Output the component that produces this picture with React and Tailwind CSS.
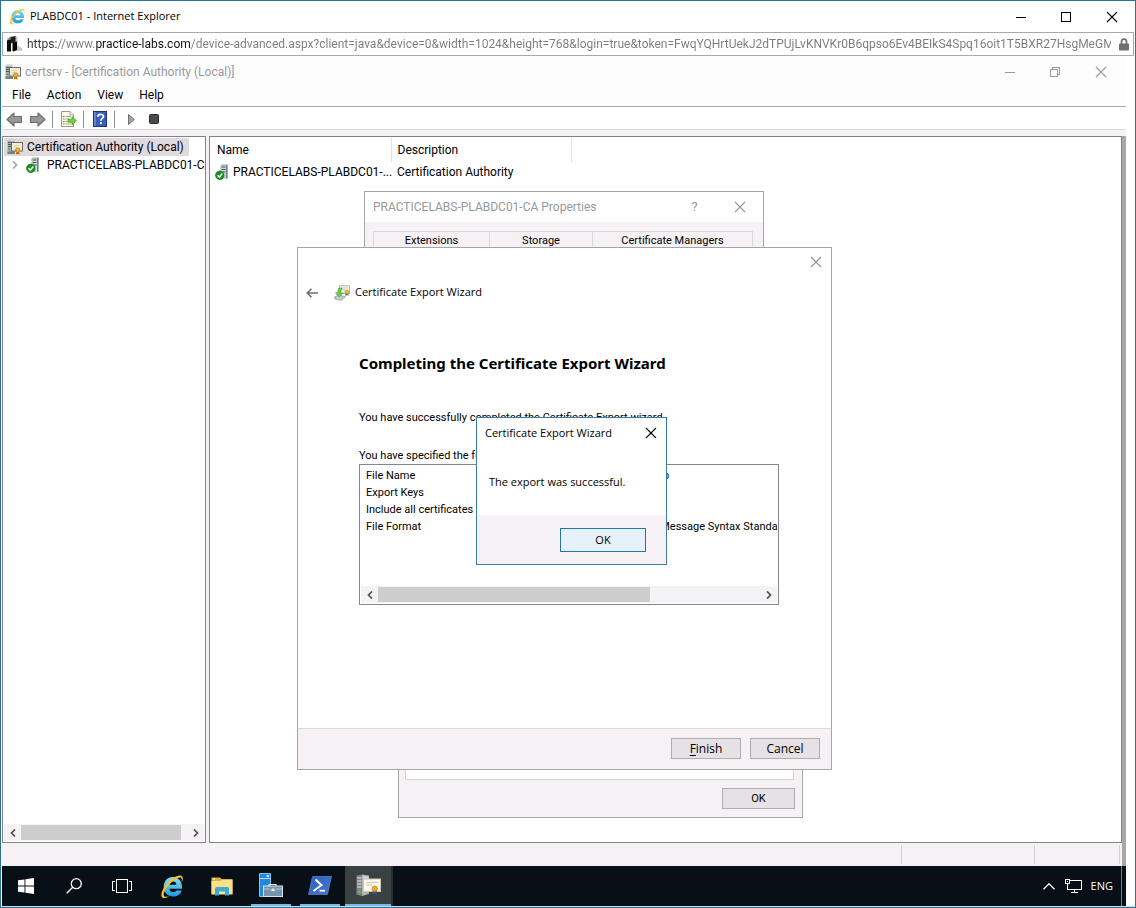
import React from "react";

const URL_TEXT =
  "https://www.practice-labs.com/device-advanced.aspx?client=java&device=0&width=1024&height=768&login=true&token=FwqYQHrtUekJ2dTPUjLvKNVKr0B6qpso6Ev4BEIkS4Spq16oit1T5BXR27HsgMeGMVbTqR5c";

/* ---------- small glyphs ---------- */

function CloseGlyph({ className = "" }) {
  return (
    <svg width="12" height="12" viewBox="0 0 12 12" className={className} aria-hidden="true">
      <path d="M1 1L11 11M11 1L1 11" stroke="currentColor" strokeWidth="1.1" fill="none" />
    </svg>
  );
}

function MinimizeGlyph() {
  return (
    <svg width="10" height="10" viewBox="0 0 10 10" shapeRendering="crispEdges" aria-hidden="true">
      <path d="M0 5.5H10" stroke="currentColor" />
    </svg>
  );
}

function MaximizeGlyph() {
  return (
    <svg width="10" height="10" viewBox="0 0 10 10" shapeRendering="crispEdges" aria-hidden="true">
      <rect x="0.5" y="0.5" width="9" height="9" fill="none" stroke="currentColor" />
    </svg>
  );
}

function RestoreGlyph() {
  return (
    <svg width="10" height="10" viewBox="0 0 10 10" shapeRendering="crispEdges" aria-hidden="true">
      <path d="M0.5 2.5H7.5V9.5H0.5ZM2.5 2V0.5H9.5V7.5H8" fill="none" stroke="currentColor" />
    </svg>
  );
}

function Chevron({ dir = "left", className = "" }) {
  return (
    <svg width="6" height="8" viewBox="0 0 6 8" className={className} aria-hidden="true">
      <path
        d={dir === "left" ? "M5 0.5L1.5 4L5 7.5" : "M1 0.5L4.5 4L1 7.5"}
        fill="none"
        stroke="currentColor"
        strokeWidth="1.7"
      />
    </svg>
  );
}

/* ---------- icons ---------- */

function IeIcon({ size = 17 }) {
  return (
    <svg width={size} height={size} viewBox="0 0 24 24" aria-hidden="true">
      <defs>
        <linearGradient id="ieBlue" x1="0" y1="0" x2="0" y2="1">
          <stop offset="0" stopColor="#8adcf9" />
          <stop offset="1" stopColor="#1c9be0" />
        </linearGradient>
      </defs>
      <path
        d="M12.400 2.900C7 2.900 3.500 7 3.500 12.300s3.800 9.400 9 9.400c4.100 0 7.200-2.100 8.300-5.900h-5.100c-.6 1-1.700 1.600-3 1.600-2.100 0-3.500-1.200-3.600-3.200h12.100c.4-6.600-3.200-11.300-8.800-11.300zM9.100 10.300c.3-1.800 1.600-3 3.400-3s3.100 1.200 3.300 3z"
        fill="url(#ieBlue)"
      />
      <path
        d="M20.800 8.600c1.600-3.300 1.500-5.800-.2-6.700C17.400.3 10.600 4 6 9.900 1.700 15.300.1 21 2.300 22.700c1.400 1 4 .2 6.700-1.700-2.300 1-4.100 1.200-4.900.4-1.500-1.500.3-6 4.100-10.500C12.400 6 17.800 2.500 20 3.500c1.100.6 1.300 2.500.8 5.100z"
        fill="#f3c22f"
      />
    </svg>
  );
}

function LabsIcon() {
  return (
    <svg width="16" height="16" viewBox="0 0 16 16" aria-hidden="true">
      <path d="M9 0.500H11.500V9.500L16 12V15H9Z" fill="#c9c9c9" />
      <path d="M1.500 2.500L4.500 0.500V4.500L1.500 5Z" fill="#8e8e8e" />
      <path d="M1 4.500L5 3.500V15.500H1Z" fill="#0b0b0b" />
      <path d="M4.500 1L9.500 0V6L4.500 7.500Z" fill="#1d1d1d" />
      <path d="M6.500 6.500L11 5.500V14L7.500 15.500L6.500 15Z" fill="#050505" />
    </svg>
  );
}

function LockIcon() {
  return (
    <svg width="12" height="13" viewBox="0 0 12 13" aria-hidden="true">
      <path d="M3.500 6V3.700a2.500 2.500 0 0 1 5 0V6" fill="none" stroke="#6f6f6f" strokeWidth="1.700" />
      <rect x="1" y="5.500" width="10" height="7" rx="0.800" fill="#6f6f6f" />
    </svg>
  );
}

function CaIcon({ size = 16 }) {
  return (
    <svg width={size} height={size} viewBox="0 0 16 16" aria-hidden="true">
      <path d="M0.500 1.500L2 0.500H7.500V14.500H0.500Z" fill="#aab0b4" />
      <path d="M0.500 1.500L2 0.500H7.500L6.500 2Z" fill="#dfe2e4" />
      <path d="M1 3.500H6M1 5.500H5M1 7.500H5" stroke="#545b60" strokeWidth="1" />
      <path d="M0.500 12.500H8V15H0.500Z" fill="#777e83" />
      <rect x="1.200" y="9.500" width="2.200" height="1.500" fill="#4fae3e" />
      <rect x="4.500" y="3.500" width="11" height="8.500" fill="#fffdf4" stroke="#6f6b60" strokeWidth="1" />
      <rect x="6" y="5" width="8" height="5.500" fill="none" stroke="#dfcf9b" strokeWidth="0.600" />
      <path d="M6.800 6.700H12.500M6.800 8.300H10" stroke="#b9b09a" strokeWidth="0.700" />
      <path d="M9.500 12L8.800 15.800L10.700 14.800L12.600 15.800L12 12Z" fill="#b96c14" />
      <circle cx="10.800" cy="11" r="2.300" fill="#f0b02d" stroke="#b97412" strokeWidth="0.700" />
    </svg>
  );
}

function CaServerIcon() {
  return (
    <svg width="16" height="16" viewBox="0 0 16 16" className="shrink-0" aria-hidden="true">
      <path d="M5.500 1.500L7 0.500H12.500V14.500H5.500Z" fill="#94a1a3" />
      <path d="M6 1.500H11V14H6Z" fill="#cfd7d8" />
      <path d="M6.500 3H10.500M6.500 5.500H10.500M6.500 8H10.500" stroke="#3f585c" strokeWidth="1.200" />
      <path d="M11 1.500L12.500 0.500V14.500H11Z" fill="#768486" />
      <circle cx="4.800" cy="11.300" r="4.200" fill="#149420" stroke="#0b6412" strokeWidth="0.700" />
      <path d="M2.500 11.300L4.300 13.200L7.300 9.500" fill="none" stroke="#fff" strokeWidth="1.500" />
    </svg>
  );
}

function ArrowIcon({ dir }) {
  return (
    <svg width="17" height="15" viewBox="0 0 17 15" aria-hidden="true">
      <path
        d={
          dir === "left"
            ? "M1 7.500L8 1V4.500H15.500V10.500H8V14Z"
            : "M16 7.500L9 1V4.500H1.500V10.500H9V14Z"
        }
        fill="#989898"
        stroke="#6c6c6c"
        strokeWidth="1.100"
        strokeLinejoin="round"
      />
    </svg>
  );
}

function ExportListIcon() {
  return (
    <svg width="17" height="16" viewBox="0 0 17 16" aria-hidden="true">
      <path d="M1.500 0.500H10L13.500 4V15.500H1.500Z" fill="#fffbe6" stroke="#9a9a86" />
      <path d="M10 0.500V4H13.500" fill="#f3ecc8" stroke="#9a9a86" strokeWidth="0.700" />
      <path d="M3.300 5.500H4.500M3.300 8H4.500M3.300 10.500H4.500M3.300 13H4.500" stroke="#4a4a4a" strokeWidth="1" />
      <path d="M5.500 5.500H11M5.500 8H9M5.500 10.500H9M5.500 13H11" stroke="#a8a79a" strokeWidth="1" />
      <path d="M8 8.200H12V5.700L16.500 9.700L12 13.700V11.200H8Z" fill="#6fd13c" stroke="#3e9c1c" strokeWidth="0.700" />
    </svg>
  );
}

function HelpIcon() {
  return (
    <svg width="14" height="16" viewBox="0 0 14 16" aria-hidden="true">
      <rect x="0.500" y="0.500" width="13" height="15" fill="#3a5cba" stroke="#1c3274" />
      <rect x="1" y="1" width="1.800" height="14" fill="#7189cf" />
      <path
        d="M4.800 5.800C4.800 2.600 10.500 2.600 10.500 5.500C10.500 7.400 7.800 7.500 7.800 9.800"
        fill="none"
        stroke="#fff"
        strokeWidth="1.700"
      />
      <rect x="6.900" y="11" width="1.900" height="2" fill="#fff" />
    </svg>
  );
}

function CertExportIcon() {
  return (
    <svg width="16" height="16" viewBox="0 0 16 16" aria-hidden="true">
      <rect x="5.500" y="0.800" width="10" height="7.500" fill="#fbf7e0" stroke="#8fa6a6" strokeWidth="0.800" />
      <path d="M7.500 3H13.500M7.500 4.700H11" stroke="#a9b6a3" strokeWidth="0.700" />
      <path d="M11.500 7.500L11.200 11L13 10L14.500 11L14 7.500Z" fill="#2d6aa8" />
      <circle cx="12.800" cy="7" r="2" fill="#f2b733" stroke="#b57c15" strokeWidth="0.500" />
      <path d="M0.500 12L5 10L11.500 12L7 15.300L1 14Z" fill="#c9cdcf" stroke="#8b8f92" strokeWidth="0.700" />
      <path d="M4.500 3.500L3.500 7.500L1.500 7.800L5 12L9.300 8.300L7.200 8C6.700 6 7 4.500 8 3Z" fill="#6bcb52" stroke="#3a932a" strokeWidth="0.500" />
    </svg>
  );
}

function WindowsIcon() {
  return (
    <svg width="16" height="16" viewBox="0 0 16 16" fill="#fff" aria-hidden="true">
      <path d="M0 2.300L6.500 1.400V7.500H0ZM7.400 1.300L16 0V7.500H7.400ZM0 8.500H6.500V14.600L0 13.700ZM7.400 8.500H16V16L7.400 14.700Z" />
    </svg>
  );
}

function SearchIcon() {
  return (
    <svg width="16" height="16" viewBox="0 0 16 16" fill="none" stroke="#fff" strokeWidth="1.300" aria-hidden="true">
      <circle cx="10.300" cy="5.700" r="5" />
      <path d="M6.700 9.300L0.700 15.300" />
    </svg>
  );
}

function TaskViewIcon() {
  return (
    <svg width="20" height="14" viewBox="0 0 20 14" fill="none" stroke="#fff" shapeRendering="crispEdges" aria-hidden="true">
      <rect x="4.500" y="0.500" width="11" height="13" />
      <path d="M3 2.500H0.500V11.500H3M17 2.500H19.500V11.500H17" />
    </svg>
  );
}

function FolderIcon() {
  return (
    <svg width="22" height="19" viewBox="0 0 22 19" aria-hidden="true">
      <path d="M0.500 0.500H9L10.500 2H21.500V17H0.500Z" fill="#dcae45" />
      <path d="M2 1.500H4V2.500H2Z" fill="#fff" />
      <path d="M0.500 4H9L10.500 3H21.500V17.500H0.500Z" fill="#fbe08c" />
      <path d="M4 18.500V11.500Q4 10 5.500 10H16.500Q18 10 18 11.500V18.500H14V14.500H8V18.500Z" fill="#3fabcf" />
    </svg>
  );
}

function ServerManagerIcon() {
  return (
    <svg width="24" height="24" viewBox="0 0 24 24" aria-hidden="true">
      <path d="M0.500 0.500H11.500V23.500H0.500Z" fill="#2488dc" stroke="#7cc3f5" />
      <path d="M1 5.500H11" stroke="#b8def8" />
      <rect x="7.500" y="2.300" width="2.500" height="1.500" fill="#fff" />
      <path d="M10 13V11.500H17V13" fill="none" stroke="#dfe7ee" strokeWidth="1.200" />
      <rect x="4.500" y="13" width="19" height="10.500" fill="#7894ac" stroke="#d9e3ec" />
      <path d="M5 16H10L12 17.500H16L18 16H23" fill="none" stroke="#b4c4d2" />
      <rect x="12.700" y="15.500" width="2.600" height="2.600" fill="#e5ecf3" />
    </svg>
  );
}

function PowerShellIcon() {
  return (
    <svg width="24" height="19" viewBox="0 0 24 19" aria-hidden="true">
      <defs>
        <linearGradient id="psBlue" x1="0" y1="0" x2="1" y2="1">
          <stop offset="0" stopColor="#2f62c4" />
          <stop offset="1" stopColor="#4a74c8" />
        </linearGradient>
      </defs>
      <path d="M4.500 0.500H23.500L19.500 18.500H0.500Z" fill="url(#psBlue)" stroke="#5c86d8" strokeWidth="0.700" />
      <path d="M7.500 3.500L13.500 9.200L5.500 15" fill="none" stroke="#fff" strokeWidth="2" />
      <path d="M11.500 14.700H17" stroke="#fff" strokeWidth="1.800" />
    </svg>
  );
}

function CertsrvTaskIcon() {
  return (
    <svg width="25" height="23" viewBox="0 0 25 23" aria-hidden="true">
      <path d="M0.500 1.500L6 0.500V22L0.500 20.500Z" fill="#7e8485" />
      <path d="M6 0.500L13 1.500V20L6 22Z" fill="#aeb4b4" />
      <path d="M6.500 3L12.500 3.500" stroke="#d8dcdc" strokeWidth="1.500" />
      <path d="M1 4H5.500M1 7H5.500M1 10H5.500M1 13H5.500" stroke="#e3e6e6" strokeWidth="1" />
      <rect x="2" y="17" width="2.500" height="2" fill="#67c05b" />
      <rect x="7.500" y="5" width="17" height="12.500" fill="#fbf5ea" stroke="#d5c5aa" />
      <path d="M10 8.500H22M10 11H16" stroke="#cdbfa8" strokeWidth="0.900" />
      <path d="M17 16L16.500 21L18.700 19.500L21 21L20.500 16Z" fill="#30559a" />
      <circle cx="18.700" cy="14.700" r="2.700" fill="#eeae2c" stroke="#b67714" strokeWidth="0.700" />
    </svg>
  );
}

function NetworkIcon() {
  return (
    <svg width="17" height="14" viewBox="0 0 17 14" fill="none" stroke="#fff" shapeRendering="crispEdges" aria-hidden="true">
      <path d="M5 1.500H16.500V10.500H2.500V5" />
      <rect x="0.500" y="0.500" width="4" height="4" />
      <path d="M2 2.500H3M9.500 10.500V13M6 13.500H13" />
    </svg>
  );
}

/* ---------- shared parts ---------- */

function HScrollbar({ thumb }) {
  return (
    <div className="flex h-[17px] items-center bg-[#f5f2f5] text-[#505050]">
      <button type="button" aria-label="Scroll left" className="flex h-full w-[17px] items-center justify-center">
        <Chevron dir="left" />
      </button>
      <div className="h-[15px] flex-1">
        <div className={`h-full bg-[#cdcdcd] ${thumb}`} />
      </div>
      <button type="button" aria-label="Scroll right" className="flex h-full w-[17px] items-center justify-center">
        <Chevron dir="right" />
      </button>
    </div>
  );
}

function PushButton({ children, className = "" }) {
  return (
    <button type="button" className={`border border-[#adadad] bg-[#e5e1e5] text-center text-black ${className}`}>
      {children}
    </button>
  );
}

/* ---------- browser chrome ---------- */

function BrowserHeader() {
  return (
    <header>
      <div className="flex h-[31px] items-center pl-2">
        <IeIcon />
        <h1 className="ml-1 flex-1 text-[11px] text-black">PLABDC01 - Internet Explorer</h1>
        <button type="button" aria-label="Minimize" className="flex h-full w-[45px] items-center justify-center"><MinimizeGlyph /></button>
        <button type="button" aria-label="Maximize" className="flex h-full w-[45px] items-center justify-center"><MaximizeGlyph /></button>
        <button type="button" aria-label="Close" className="flex h-full w-[47px] items-center justify-center"><CloseGlyph /></button>
      </div>
      <label className="mx-px flex h-6 items-center border border-[#a9a9a9] pr-[3px] pl-[3px]">
        <LabsIcon />
        <span className="sr-only">Address</span>
        <input
          type="text"
          readOnly
          value={URL_TEXT}
          className="ml-[5px] min-w-0 flex-1 bg-[linear-gradient(90deg,#333_0_30px,#7b7b7b_30px_68px,#111_68px_163px,#7b7b7b_163px)] bg-clip-text font-['Roboto',sans-serif] text-[12px] text-transparent outline-none"
        />
        <span className="ml-[7px]"><LockIcon /></span>
      </label>
    </header>
  );
}

/* ---------- certsrv console ---------- */

function ConsoleHeader() {
  return (
    <div className="font-['Roboto',sans-serif] text-[12px]">
      <div className="flex h-[31px] items-center bg-[#fdfdfe] pr-[2px] pl-[3px] text-[#999]">
        <CaIcon />
        <h2 className="ml-1 flex-1">certsrv - [Certification Authority (Local)]</h2>
        <button type="button" aria-label="Minimize console" className="flex h-full w-[45px] items-center justify-center"><MinimizeGlyph /></button>
        <button type="button" aria-label="Restore console" className="flex h-full w-[45px] items-center justify-center"><RestoreGlyph /></button>
        <button type="button" aria-label="Close console" className="flex h-full w-[47px] items-center justify-center"><CloseGlyph /></button>
      </div>
      <nav className="flex h-5 items-center gap-4 border-b border-[#a8a8ac] bg-[#fdfdfe] pb-[3px] pl-[10px] text-black">
        <button type="button">File</button>
        <button type="button">Action</button>
        <button type="button">View</button>
        <button type="button">Help</button>
      </nav>
      <div className="flex h-[23px] items-center border-b border-[#dcd9dc] pt-[2px] pl-1">
        <button type="button" aria-label="Back"><ArrowIcon dir="left" /></button>
        <button type="button" aria-label="Forward" className="ml-[6px]"><ArrowIcon dir="right" /></button>
        <span className="ml-[6px] h-[17px] w-px bg-[#8f8f8f]" />
        <button type="button" aria-label="Export List" className="ml-[7px]"><ExportListIcon /></button>
        <span className="ml-[6px] h-[17px] w-px bg-[#8f8f8f]" />
        <button type="button" aria-label="Help topics" className="ml-[9px]"><HelpIcon /></button>
        <span className="ml-[7px] h-[17px] w-px bg-[#8f8f8f]" />
        <button type="button" aria-label="Start service" className="ml-[13px]">
          <svg width="7" height="11" viewBox="0 0 7 11" aria-hidden="true">
            <path d="M0.500 0.500L6.300 5.500L0.500 10.500Z" fill="#a5a5a5" stroke="#6f6f6f" />
          </svg>
        </button>
        <button type="button" aria-label="Stop service" className="ml-[14px]">
          <svg width="10" height="10" viewBox="0 0 10 10" aria-hidden="true">
            <rect x="0.500" y="0.500" width="9" height="9" rx="1" fill="#4a4a4a" stroke="#2c2c2c" />
          </svg>
        </button>
      </div>
    </div>
  );
}

function ConsolePanes() {
  return (
    <div className="flex flex-1 bg-[#f5f1f5] pt-[6px] font-['Roboto',sans-serif] text-[12px] text-black">
      <div className="flex w-[204px] flex-col border border-[#85828a] bg-white">
        <div className="mt-px ml-px flex h-[18px] w-[185px] items-center gap-1 bg-[#dedadd] pl-[3px] whitespace-nowrap">
          <CaIcon />
          <span>Certification Authority (Local)</span>
        </div>
        <div className="flex h-[18px] items-center overflow-hidden pl-[9px] whitespace-nowrap">
          <Chevron dir="right" className="shrink-0 text-[#a6a6a6]" />
          <span className="ml-[8px] shrink-0"><CaServerIcon /></span>
          <span className="ml-[5px]">PRACTICELABS-PLABDC01-CA</span>
        </div>
        <div className="flex-1" />
        <div className="px-px pb-px"><HScrollbar thumb="w-[160px]" /></div>
      </div>
      <div className="ml-[3px] flex-1 border border-[#85828a] bg-white pt-px">
        <table className="w-[361px] table-fixed text-left">
          <thead>
            <tr className="h-6">
              <th className="w-[181px] border-r border-[#e2e2e2] pl-[7px] font-normal">Name</th>
              <th className="w-[180px] border-r border-[#e2e2e2] pl-[6px] font-normal">Description</th>
            </tr>
          </thead>
          <tbody>
            <tr className="h-5">
              <td>
                <span className="flex items-center gap-[2px] pl-[5px] whitespace-nowrap">
                  <CaServerIcon />
                  PRACTICELABS-PLABDC01-...
                </span>
              </td>
              <td className="pl-[6px]">Certification Authority</td>
            </tr>
          </tbody>
        </table>
      </div>
      <div className="w-[4px] bg-[#aaa7aa]" />
    </div>
  );
}

function StatusBar() {
  return (
    <div className="flex h-[23px] bg-[#f5f1f5]">
      <div className="flex-1" />
      <div className="my-[2px] w-[133px] border-l border-[#d3d0d3]" />
      <div className="my-[2px] w-[86px] border-x border-[#d3d0d3]" />
      <div className="w-[2px]" />
      <div className="w-[4px] bg-[#aaa7aa]" />
    </div>
  );
}

/* ---------- dialogs ---------- */

function PropertiesDialog() {
  return (
    <section aria-label="CA properties" className="absolute top-[190px] left-[363px] w-[400px] border border-[#a5a5a5] bg-[#f5f1f5] font-['Roboto',sans-serif]">
      <div className="flex h-[30px] items-center bg-white pl-2 text-[12px] text-[#999]">
        <h3 className="flex-1">PRACTICELABS-PLABDC01-CA Properties</h3>
        <button type="button" aria-label="What's this" className="w-[45px] text-[13px]">?</button>
        <button type="button" aria-label="Close properties" className="flex w-[46px] items-center justify-center"><CloseGlyph /></button>
      </div>
      <div role="tablist" className="mx-2 mt-[9px] mr-[10px] flex h-40 items-start text-[11px] text-black">
        <button type="button" role="tab" className="h-5 w-[116px] border-t border-l border-[#dad7da]">Extensions</button>
        <button type="button" role="tab" className="h-5 w-[103px] border-t border-l border-[#dad7da]">Storage</button>
        <button type="button" role="tab" className="h-5 flex-1 border-x border-t border-[#dad7da]">Certificate Managers</button>
      </div>
    </section>
  );
}

function CertificateDialog() {
  return (
    <section aria-label="Certificate" className="absolute top-[599px] left-[397px] w-[405px] border border-[#a5a5a5] bg-[#f5f1f5] px-[6px] pb-2 font-['Roboto',sans-serif]">
      <div className="mr-[2px] h-[179px] border border-[#d8d5d8] bg-white" />
      <div className="mt-2 flex justify-end pr-px">
        <PushButton className="h-[21px] w-[73px] pt-px text-[11px]">OK</PushButton>
      </div>
    </section>
  );
}

const SETTINGS = [
  ["File Name", "C:\\PLAB-CA.p7b"],
  ["Export Keys", ""],
  ["Include all certificates in the path", ""],
  ["File Format", "Cryptographic Message Syntax Standard"],
];

function WizardDialog() {
  return (
    <section aria-label="Certificate Export Wizard" className="absolute top-[246px] left-[296px] flex w-[535px] flex-col border border-[#a5a5a5] bg-white text-black">
      <div className="flex h-7 justify-end pr-[9px]">
        <button type="button" aria-label="Close wizard" className="text-[#8f8f8f]"><CloseGlyph /></button>
      </div>
      <div className="flex h-8 items-center pt-px pl-2">
        <button type="button" aria-label="Back to previous page">
          <svg width="12" height="10" viewBox="0 0 12 10" aria-hidden="true">
            <path d="M12 5H1.200M5.500 0.700L1.200 5L5.500 9.300" fill="none" stroke="#6f6f6f" strokeWidth="1.500" />
          </svg>
        </button>
        <span className="ml-4"><CertExportIcon /></span>
        <span className="ml-[5px] text-[11px]">Certificate Export Wizard</span>
      </div>
      <div className="flex flex-col pr-[52px] pb-[123px] pl-[61px] font-['Roboto',sans-serif] text-[11px]">
        <h3 className="mt-[43px] h-6 font-['Noto_Sans',sans-serif] text-[15px] leading-6 font-bold">Completing the Certificate Export Wizard</h3>
        <p className="mt-[35px] h-4 leading-4">You have successfully completed the Certificate Export wizard.</p>
        <p className="mt-[22px] h-4 leading-4">You have specified the following settings:</p>
        <div className="flex h-[141px] flex-col border border-[#828790] p-px">
          <div className="flex-1 overflow-hidden pt-px">
            <table className="w-full table-fixed text-left">
              <tbody>
                {SETTINGS.map(([name, value]) => (
                  <tr key={name} className="h-[17px] leading-[17px]">
                    <td className="w-[228px] overflow-hidden pl-[5px] whitespace-nowrap">{name}</td>
                    <td className="overflow-hidden whitespace-nowrap">{value}</td>
                  </tr>
                ))}
              </tbody>
            </table>
          </div>
          <HScrollbar thumb="w-[272px]" />
        </div>
      </div>
      <div className="flex h-[41px] justify-end gap-[9px] border-t border-[#dcd9dc] bg-[#f5f1f5] pt-[9px] pr-[11px]">
        <PushButton className="h-[21px] w-[70px] text-[12px] leading-[18px]"><span className="underline underline-offset-2">F</span>inish</PushButton>
        <PushButton className="h-[21px] w-[70px] text-[12px] leading-[18px]">Cancel</PushButton>
      </div>
    </section>
  );
}

function MessageBox() {
  return (
    <section role="alertdialog" aria-label="Certificate Export Wizard message" className="absolute top-[416px] left-[475px] w-[191px] border border-[#3a7ca5] bg-white text-black">
      <div className="flex h-[30px] items-center pr-[9px] pl-2">
        <h3 className="flex-1 text-[11px]">Certificate Export Wizard</h3>
        <button type="button" aria-label="Close message"><CloseGlyph /></button>
      </div>
      <p className="h-[67px] pt-[25px] pl-3 text-[11px] leading-[18px]">The export was successful.</p>
      <div className="flex h-[49px] justify-end bg-[#f5f1f5] pt-[13px] pr-5">
        <button type="button" className="h-6 w-[86px] border border-[#27789f] bg-[#e5f1fb] text-[11px]">OK</button>
      </div>
    </section>
  );
}

/* ---------- taskbar ---------- */

function TaskButton({ label, running, active, children }) {
  return (
    <button
      type="button"
      aria-label={label}
      className={`flex h-10 flex-col items-center ${active ? "ml-px w-12 border-r-2 border-[#262e33] bg-[#3a4142]" : "w-[49px]"}`}
    >
      <span className="flex flex-1 items-center justify-center">{children}</span>
      {running && <span className={`h-[2px] bg-[#76b9ed] ${active ? "w-full" : "w-10"}`} />}
    </button>
  );
}

function Taskbar() {
  return (
    <footer className="flex h-10 bg-[#070f17]">
      <button type="button" aria-label="Start" className="flex w-12 items-center justify-center"><WindowsIcon /></button>
      <button type="button" aria-label="Search" className="flex w-12 items-center justify-center"><SearchIcon /></button>
      <button type="button" aria-label="Task View" className="mr-[2px] flex w-12 items-center justify-center"><TaskViewIcon /></button>
      <TaskButton label="Internet Explorer"><IeIcon size={25} /></TaskButton>
      <TaskButton label="File Explorer"><FolderIcon /></TaskButton>
      <TaskButton label="Server Manager" running><ServerManagerIcon /></TaskButton>
      <TaskButton label="Windows PowerShell" running><PowerShellIcon /></TaskButton>
      <TaskButton label="Certification Authority" running active><CertsrvTaskIcon /></TaskButton>
      <div className="flex-1" />
      <div className="flex items-center text-[11px] text-white">
        <button type="button" aria-label="Show hidden icons">
          <svg width="12" height="7" viewBox="0 0 12 7" fill="none" stroke="#fff" strokeWidth="1.300" aria-hidden="true">
            <path d="M0.500 6.300L6 0.800L11.500 6.300" />
          </svg>
        </button>
        <button type="button" aria-label="Network" className="ml-[10px]"><NetworkIcon /></button>
        <button type="button" className="ml-[9px]">ENG</button>
      </div>
      <button type="button" aria-label="Show desktop" className="ml-2 w-[5px] border-l border-[#7b8085]" />
    </footer>
  );
}

export default function App() {
  return (
    <div className="relative flex min-h-screen flex-col border border-[#2f7196] bg-white font-['Open_Sans',sans-serif]">
      <BrowserHeader />
      <main className="flex flex-1 flex-col pr-[9px] pl-px">
        <ConsoleHeader />
        <ConsolePanes />
        <StatusBar />
        <Taskbar />
      </main>
      <div className="h-px bg-[#b9e3ee]" />
      <PropertiesDialog />
      <CertificateDialog />
      <WizardDialog />
      <MessageBox />
    </div>
  );
}
